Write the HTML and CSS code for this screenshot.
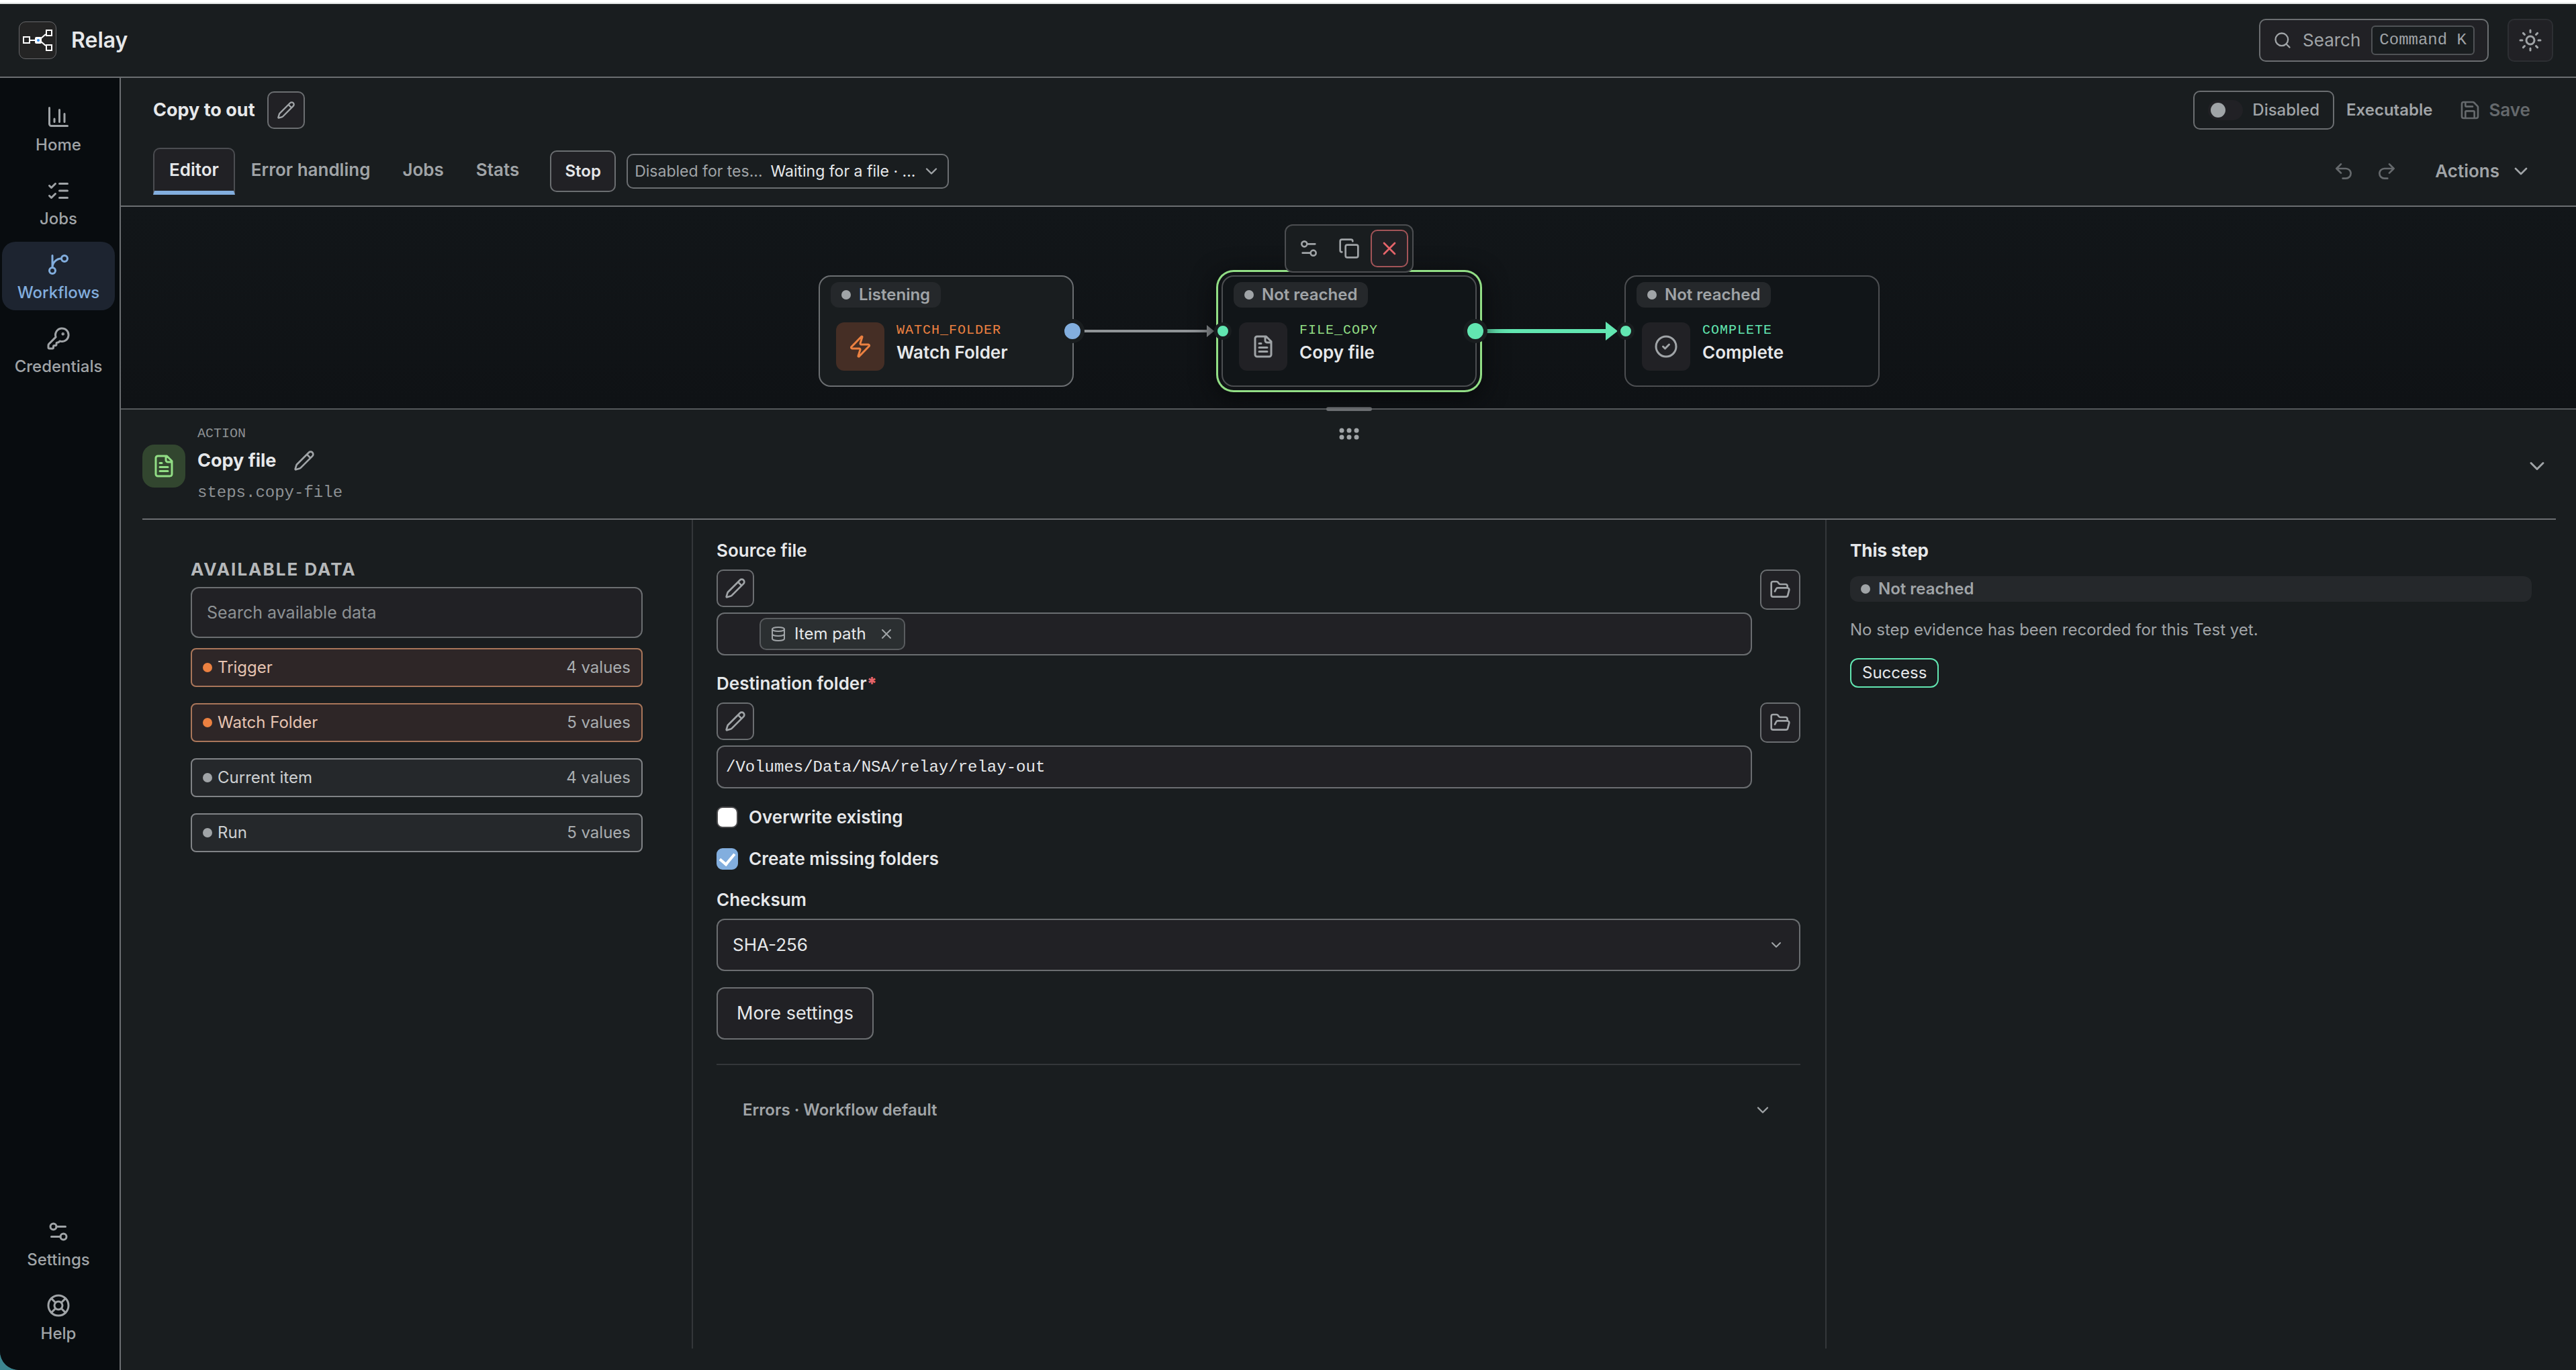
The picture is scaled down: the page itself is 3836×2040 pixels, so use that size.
FILE: index.html
```html
<!DOCTYPE html>
<html lang="en">
<head>
<meta charset="utf-8">
<title>Relay</title>
<link rel="stylesheet" href="styles.css">
</head>
<body>
<svg class="sprite" aria-hidden="true">
  <symbol id="chart" viewBox="0 0 24 24"><path d="M3 3v16a2 2 0 0 0 2 2h16M18 17V9M13 17V5M8 17v-3"/></symbol>
  <symbol id="checks" viewBox="0 0 24 24"><path d="M13 5h8M13 12h8M13 19h8M3 17l2 2 4-4M3 7l2 2 4-4"/></symbol>
  <symbol id="branch" viewBox="0 0 24 24"><path d="M15 6a9 9 0 0 0-9 9V3"/><circle cx="18" cy="6" r="3"/><circle cx="6" cy="18" r="3"/></symbol>
  <symbol id="key" viewBox="0 0 24 24"><path d="M2.586 17.414A2 2 0 0 0 2 18.828V21a1 1 0 0 0 1 1h3a1 1 0 0 0 1-1v-1a1 1 0 0 1 1-1h1a1 1 0 0 0 1-1v-1a1 1 0 0 1 1-1h.172a2 2 0 0 0 1.414-.586l.814-.814a6.5 6.5 0 1 0-4-4z"/><circle cx="16.5" cy="7.5" r=".5" fill="currentColor"/></symbol>
  <symbol id="sliders" viewBox="0 0 24 24"><path d="M14 17H5M19 7h-9"/><circle cx="17" cy="17" r="3"/><circle cx="7" cy="7" r="3"/></symbol>
  <symbol id="buoy" viewBox="0 0 24 24"><circle cx="12" cy="12" r="10"/><path d="m4.93 4.93 4.24 4.24M14.83 9.17l4.24-4.24M14.83 14.83l4.24 4.24M9.17 14.83l-4.24 4.24"/><circle cx="12" cy="12" r="4"/></symbol>
  <symbol id="pencil" viewBox="0 0 24 24"><path d="M21.174 6.812a1 1 0 0 0-3.986-3.987L3.842 16.174a2 2 0 0 0-.5.83l-1.321 4.352a.5.5 0 0 0 .623.622l4.353-1.32a2 2 0 0 0 .83-.497zM15 5l4 4"/></symbol>
  <symbol id="search" viewBox="0 0 24 24"><circle cx="11" cy="11" r="8"/><path d="m21 21-4.3-4.3"/></symbol>
  <symbol id="sun" viewBox="0 0 24 24"><circle cx="12" cy="12" r="4"/><path d="M12 2v2M12 20v2M4.93 4.93l1.41 1.41M17.66 17.66l1.41 1.41M2 12h2M20 12h2M6.34 17.66l-1.41 1.41M19.07 4.93l-1.41 1.41"/></symbol>
  <symbol id="save" viewBox="0 0 24 24"><path d="M15.2 3a2 2 0 0 1 1.4.6l3.8 3.8a2 2 0 0 1 .6 1.4V19a2 2 0 0 1-2 2H5a2 2 0 0 1-2-2V5a2 2 0 0 1 2-2zM17 21v-7a1 1 0 0 0-1-1H8a1 1 0 0 0-1 1v7M7 3v4a1 1 0 0 0 1 1h7"/></symbol>
  <symbol id="undo" viewBox="0 0 24 24"><path d="M9 14 4 9l5-5M4 9h10.5a5.5 5.5 0 0 1 0 11H11"/></symbol>
  <symbol id="redo" viewBox="0 0 24 24"><path d="m15 14 5-5-5-5M20 9H9.500a5.500 5.500 0 0 0 0 11H13"/></symbol>
  <symbol id="down" viewBox="0 0 24 24"><path d="m6 9 6 6 6-6"/></symbol>
  <symbol id="zap" viewBox="0 0 24 24"><path d="M4 14a1 1 0 0 1-.78-1.63l9.9-10.2a.5.5 0 0 1 .86.46l-1.92 6.02A1 1 0 0 0 13 10h7a1 1 0 0 1 .78 1.63l-9.900 10.200a.5.5 0 0 1-.86-.46l1.920-6.020A1 1 0 0 0 11 14z"/></symbol>
  <symbol id="file" viewBox="0 0 24 24"><path d="M15 2H6a2 2 0 0 0-2 2v16a2 2 0 0 0 2 2h12a2 2 0 0 0 2-2V7ZM14 2v4a2 2 0 0 0 2 2h4M10 9H8M16 13H8M16 17H8"/></symbol>
  <symbol id="okay" viewBox="0 0 24 24"><circle cx="12" cy="12" r="10"/><path d="m9 12 2 2 4-4"/></symbol>
  <symbol id="copy" viewBox="0 0 24 24"><rect x="8" y="8" width="14" height="14" rx="2"/><path d="M4 16c-1.100 0-2-.9-2-2V4c0-1.100.9-2 2-2h10c1.100 0 2 .9 2 2"/></symbol>
  <symbol id="cross" viewBox="0 0 24 24"><path d="M18 6 6 18M6 6l12 12"/></symbol>
  <symbol id="folder" viewBox="0 0 24 24"><path d="m6 14 1.500-2.900A2 2 0 0 1 9.240 10H20a2 2 0 0 1 1.940 2.500l-1.540 6a2 2 0 0 1-1.950 1.500H4a2 2 0 0 1-2-2V5a2 2 0 0 1 2-2h3.900a2 2 0 0 1 1.690.9l.81 1.200a2 2 0 0 0 1.670.9H18a2 2 0 0 1 2 2v2"/></symbol>
  <symbol id="data" viewBox="0 0 24 24"><ellipse cx="12" cy="5" rx="9" ry="3"/><path d="M3 5v14a9 3 0 0 0 18 0V5M3 12a9 3 0 0 0 18 0"/></symbol>
</svg>

<header class="topbar">
  <div class="logo">
    <svg viewBox="0 0 48 48" aria-hidden="true"><path class="wire" d="M12 24h9M28 22l8-7M28 25l8 7"/><path class="box" d="M3 19h9v9H3zM37 9h8v8h-8zM37 31h8v8h-8z"/><rect class="hub" x="21" y="20" width="8" height="8" rx="1"/><circle class="core" cx="25" cy="24" r="2"/></svg>
  </div>
  <span class="brand">Relay</span>
  <button class="search"><svg class="i i28"><use href="#search"/></svg><span>Search</span><kbd>Command K</kbd></button>
  <button class="theme" aria-label="Toggle theme"><svg class="i i36"><use href="#sun"/></svg></button>
</header>

<div class="body">
  <nav class="side">
    <a class="nav" href="#home"><svg class="i i36"><use href="#chart"/></svg>Home</a>
    <a class="nav" href="#jobs"><svg class="i i36"><use href="#checks"/></svg>Jobs</a>
    <a class="nav current" href="#workflows"><svg class="i i36"><use href="#branch"/></svg>Workflows</a>
    <a class="nav" href="#credentials"><svg class="i i36"><use href="#key"/></svg>Credentials</a>
    <a class="nav last" href="#settings"><svg class="i i36"><use href="#sliders"/></svg>Settings</a>
    <a class="nav" href="#help"><svg class="i i36"><use href="#buoy"/></svg>Help</a>
  </nav>

  <main class="main">
    <section class="bar">
      <div class="row title-row">
        <h1>Copy to out</h1>
        <button class="square" aria-label="Rename workflow"><svg class="i i28"><use href="#pencil"/></svg></button>
        <label class="switch"><input type="checkbox" role="switch">Disabled</label>
        <span class="mode">Executable</span>
        <button class="plain save" disabled><svg class="i i32"><use href="#save"/></svg>Save</button>
      </div>
      <div class="row tab-row">
        <a class="tab active" href="#editor">Editor</a>
        <a class="tab" href="#errors">Error handling</a>
        <a class="tab" href="#wfjobs">Jobs</a>
        <a class="tab" href="#stats">Stats</a>
        <button class="stop">Stop</button>
        <button class="status"><span class="dim">Disabled for tes...</span><span class="now">Waiting for a file · ...</span><svg class="i i28"><use href="#down"/></svg></button>
        <button class="plain undo" aria-label="Undo" disabled><svg class="i i32"><use href="#undo"/></svg></button>
        <button class="plain redo" aria-label="Redo" disabled><svg class="i i32"><use href="#redo"/></svg></button>
        <button class="plain actions">Actions<svg class="i i32"><use href="#down"/></svg></button>
      </div>
    </section>

    <section class="canvas">
      <div class="graph">
        <svg class="edges" viewBox="0 0 1580 300" aria-hidden="true">
          <path class="e1" d="M395 185h186"/><path class="a1" d="M579 176l11 9-11 9z"/>
          <path class="e2" d="M996 185h178"/><path class="a2" d="M1173 171l18 14-18 14z"/>
        </svg>
        <article class="node n1">
          <span class="chip"><i class="dot"></i>Listening</span>
          <div class="info"><span class="tile orange"><svg class="i i36"><use href="#zap"/></svg></span><div><p class="kind k1">WATCH_FOLDER</p><p class="name">Watch Folder</p></div></div>
          <i class="port out blue"></i>
        </article>
        <article class="node n2">
          <span class="chip"><i class="dot"></i>Not reached</span>
          <div class="info"><span class="tile"><svg class="i i36"><use href="#file"/></svg></span><div><p class="kind k2">FILE_COPY</p><p class="name">Copy file</p></div></div>
          <i class="port in"></i><i class="port out"></i>
        </article>
        <article class="node n3">
          <span class="chip"><i class="dot"></i>Not reached</span>
          <div class="info"><span class="tile"><svg class="i i36"><use href="#okay"/></svg></span><div><p class="kind k3">COMPLETE</p><p class="name">Complete</p></div></div>
          <i class="port in"></i>
        </article>
        <div class="tools">
          <button aria-label="Configure"><svg class="i i32"><use href="#sliders"/></svg></button>
          <button aria-label="Duplicate"><svg class="i i32"><use href="#copy"/></svg></button>
          <button class="del" aria-label="Delete"><svg class="i i32"><use href="#cross"/></svg></button>
        </div>
      </div>
    </section>

    <section class="panel">
      <div class="grip"><svg viewBox="0 0 30 20" aria-hidden="true"><circle cx="4" cy="5" r="3.500"/><circle cx="15" cy="5" r="3.500"/><circle cx="26" cy="5" r="3.500"/><circle cx="4" cy="15" r="3.500"/><circle cx="15" cy="15" r="3.500"/><circle cx="26" cy="15" r="3.500"/></svg></div>
      <header class="phead">
        <span class="tile green"><svg class="i i36"><use href="#file"/></svg></span>
        <div class="ptext">
          <p class="ptype">ACTION</p>
          <div class="pname"><h2>Copy file</h2><button class="plain" aria-label="Rename step"><svg class="i i32"><use href="#pencil"/></svg></button></div>
          <p class="pid">steps.copy-file</p>
        </div>
        <button class="plain collapse" aria-label="Collapse panel"><svg class="i i36"><use href="#down"/></svg></button>
      </header>
      <div class="cols">
        <aside class="avail">
          <h3>AVAILABLE DATA</h3>
          <input type="search" aria-label="Search available data" placeholder="Search available data">
          <button class="src hot"><i class="dot"></i>Trigger<span>4 values</span></button>
          <button class="src hot"><i class="dot"></i>Watch Folder<span>5 values</span></button>
          <button class="src"><i class="dot"></i>Current item<span>4 values</span></button>
          <button class="src"><i class="dot"></i>Run<span>5 values</span></button>
        </aside>
        <form class="form">
          <div class="field">
            <span class="label" id="source-label">Source file</span>
            <div class="picks"><button type="button" class="square" aria-label="Edit source"><svg class="i i32"><use href="#pencil"/></svg></button><button type="button" class="browse" aria-label="Browse source"><svg class="i i32"><use href="#folder"/></svg></button></div>
            <div class="box" role="textbox" aria-labelledby="source-label"><span class="token"><svg class="i i24"><use href="#data"/></svg>Item path<button type="button" aria-label="Remove"><svg class="i i24"><use href="#cross"/></svg></button></span></div>
          </div>
          <div class="field">
            <label class="label" for="dest">Destination folder<b>*</b></label>
            <div class="picks"><button type="button" class="square" aria-label="Edit destination"><svg class="i i32"><use href="#pencil"/></svg></button><button type="button" class="browse" aria-label="Browse destination"><svg class="i i32"><use href="#folder"/></svg></button></div>
            <input class="box path" id="dest" type="text" value="/Volumes/Data/NSA/relay/relay-out">
          </div>
          <div class="checks">
            <label class="check"><input type="checkbox">Overwrite existing</label>
            <label class="check"><input type="checkbox" checked>Create missing folders</label>
          </div>
          <div class="field sum">
            <label class="label" for="sum">Checksum</label>
            <div class="select"><select id="sum"><option>SHA-256</option></select><svg class="i i24"><use href="#down"/></svg></div>
          </div>
          <button type="button" class="more">More settings</button>
          <button type="button" class="errors">Errors · Workflow default<svg class="i i28"><use href="#down"/></svg></button>
        </form>
        <aside class="step">
          <h3>This step</h3>
          <p class="state"><i class="dot"></i>Not reached</p>
          <p class="note">No step evidence has been recorded for this Test yet.</p>
          <button class="success">Success</button>
        </aside>
      </div>
    </section>
  </main>
</div>
</body>
</html>
```
FILE: styles.css
```css
* { box-sizing: border-box; margin: 0; }
:root {
  --sans: Inter, "Liberation Sans", sans-serif;
  --mono: "Liberation Mono", monospace;
  --bg: #191d1f; --raised: #212125; --line: #6b6e71; --faint: #34373a;
  --text: #e6e8ea; --muted: #a0a4a7; --blue: #82aede; --green: #62e6b1; --leaf: #92de85; --orange: #ec8141;
}
html { height: 100%; background: #3d8791; }
body { height: 100%; display: flex; flex-direction: column; border-top: 4px solid #fff; background: var(--bg); color: var(--text); font: 400 24px/32px var(--sans); border-bottom-left-radius: 28px; overflow: hidden; }
button, input, select { font: inherit; color: inherit; }
button { display: flex; align-items: center; justify-content: center; padding: 0; border: 2px solid var(--line); border-radius: 10px; background: var(--raised); color: var(--muted); }
a { color: inherit; text-decoration: none; }
.sprite { position: absolute; width: 0; height: 0; }
.i { flex: none; fill: none; stroke: currentColor; stroke-width: 2; stroke-linecap: round; stroke-linejoin: round; }
.i24 { width: 24px; height: 24px; }
.i28 { width: 28px; height: 28px; }
.i32 { width: 32px; height: 32px; }
.i36 { width: 36px; height: 36px; }
.dot { flex: none; width: 14px; height: 14px; border-radius: 50%; background: var(--muted); }
.plain { border: 0; background: none; font-size: 26px; font-weight: 600; }
.plain:disabled { color: #65696c; }

.topbar { display: flex; align-items: center; height: 112px; flex: none; padding: 0 34px 0 28px; border-top: 2px solid #dfe2e1; border-bottom: 2px solid var(--line); }
.logo { width: 56px; height: 56px; border: 1px solid #67676a; border-radius: 10px; background: #242424; display: grid; place-items: center; }
.logo svg { width: 48px; height: 48px; fill: none; stroke: #fff; stroke-width: 2; }
.logo .hub { fill: #fff; }
.logo .core { fill: #2f8cf0; stroke: none; }
.brand { margin-left: 22px; font-size: 32px; font-weight: 600; }
.search { width: 342px; margin-left: auto; height: 64px; gap: 16px; font-size: 26px; }
kbd { height: 44px; padding: 0 10px; border: 2px solid #4f5255; border-radius: 6px; background: var(--bg); font: 24px/40px var(--mono); }
.theme { width: 68px; height: 64px; margin-left: 28px; border-color: #2d2f33; }

.body { flex: 1; display: flex; min-height: 0; }
.side { width: 180px; flex: none; display: flex; flex-direction: column; gap: 8px; padding: 24px 7px 28px 3px; border-right: 2px solid var(--line); background: #080c0f; }
.nav { display: flex; flex-direction: column; align-items: center; gap: 8px; height: 102px; padding-top: 16px; border-radius: 20px; color: var(--muted); font-weight: 500; }
.nav.current { background: #1d2430; color: var(--blue); }
.last { margin-top: auto; }

.main { flex: 1; min-width: 0; display: flex; flex-direction: column; }
.bar { flex: none; height: 192px; padding: 16px 66px 0 48px; border-bottom: 2px solid var(--line); }
.row { display: flex; align-items: center; }
.title-row { height: 64px; }
h1 { font-size: 27px; font-weight: 700; }
.square { width: 56px; height: 56px; }
.title-row .square { margin-left: 18px; }
.switch { display: flex; align-items: center; gap: 14px; height: 58px; margin-left: auto; padding: 0 20px; border: 2px solid var(--line); border-radius: 10px; color: var(--muted); font-weight: 500; }
.switch input { appearance: none; width: 52px; height: 30px; margin: 0; padding: 4px; border-radius: 15px; background: var(--raised); }
.switch input::before { content: ""; display: block; width: 22px; height: 22px; border-radius: 50%; background: var(--muted); }
.mode { margin-left: 18px; color: var(--muted); font-weight: 600; }
.save { margin-left: 40px; margin-right: 2px; gap: 12px; }
.tab-row { height: 118px; }
.tab { height: 70px; padding: 0 22px; border: 2px solid transparent; border-bottom-width: 6px; color: var(--muted); font-size: 26px; font-weight: 600; line-height: 62px; }
.active { border-color: #4b4d51; border-bottom-color: var(--blue); border-radius: 10px 10px 0 0; background: var(--raised); color: var(--text); }
.stop { width: 98px; height: 62px; margin-left: 22px; color: var(--text); font-weight: 600; }
.status { width: 480px; height: 52px; margin-left: 16px; padding: 0 10px; background: none; font-size: 23px; white-space: nowrap; }
.now { margin-left: 12px; color: var(--text); }
.status .i { margin-left: auto; }
.undo { margin-left: auto; }
.redo { margin-left: 32px; }
.actions { margin-left: 56px; gap: 16px; }

.canvas { flex: none; height: 300px; background: linear-gradient(#121619, #0f1215); display: flex; justify-content: center; overflow: hidden; }
.graph { position: relative; width: 1580px; height: 300px; }
.edges { position: absolute; inset: 0; width: 1580px; height: 300px; }
.e1, .e2 { fill: none; stroke: #909497; stroke-width: 4; }
.e2 { stroke: var(--green); stroke-width: 6; }
.a1 { fill: #909497; }
.a2 { fill: var(--green); }
.node { position: absolute; top: 102px; width: 380px; height: 166px; padding: 8px 16px; border: 2px solid #4c4e51; border-radius: 18px; background: #111518; }
.n1 { left: 1px; border-color: var(--line); background: var(--bg); }
.n2 { left: 601px; box-shadow: 0 0 0 5px #101316, 0 0 0 8px var(--leaf), 0 8px 36px 8px #08090b; }
.n3 { left: 1201px; }
.chip { display: inline-flex; align-items: center; gap: 12px; height: 38px; padding: 0 16px; border-radius: 12px; background: #25282b; color: var(--muted); font-weight: 600; }
.info { display: flex; gap: 18px; margin: 22px 0 0 8px; }
.tile { flex: none; display: grid; place-items: center; width: 72px; height: 72px; border-radius: 12px; background: var(--raised); color: var(--muted); }
.orange { background: #452e25; color: var(--orange); }
.kind { font: 20px/24px var(--mono); letter-spacing: 1px; }
.k1 { color: var(--orange); }
.k2 { color: var(--leaf); }
.k3 { color: var(--green); }
.name { font-size: 26px; font-weight: 600; line-height: 42px; }
.port { position: absolute; border: 6px solid var(--bg); border-radius: 50%; background: var(--green); }
.out { width: 36px; height: 36px; right: -18px; top: 63px; }
.in { width: 26px; height: 26px; left: -13px; top: 68px; border-width: 5px; }
.blue { background: var(--blue); }
.tools { position: absolute; left: 695px; top: 26px; display: flex; width: 192px; height: 72px; padding: 6px; gap: 4px; border: 2px solid #4c4e51; border-radius: 12px; background: var(--bg); }
.tools button { width: 56px; height: 56px; border-color: transparent; background: none; }
.tools .del { border-color: #a35458; background: var(--raised); color: #e5646a; }

.panel { flex: 1; min-height: 0; display: flex; flex-direction: column; border-top: 2px solid #55585b; padding: 0 30px 32px 32px; }
.grip { height: 0; display: flex; flex-direction: column; align-items: center; }
.grip::before { content: ""; flex: none; width: 68px; height: 6px; margin-top: -4px; border-radius: 3px; background: var(--line); }
.grip svg { flex: none; width: 30px; height: 20px; margin-top: 24px; fill: var(--muted); }
.phead { flex: none; display: flex; align-items: center; height: 164px; padding-top: 6px; border-bottom: 2px solid var(--line); }
.green { width: 64px; height: 64px; border-radius: 18px; background: #32462f; color: var(--leaf); }
.ptext { margin-left: 18px; color: #8d9194; }
.ptype { font: 20px/28px var(--mono); }
.pname { display: flex; align-items: center; gap: 26px; height: 52px; color: var(--text); }
h2 { font-size: 27px; font-weight: 700; }
.pid { font: 24px/44px var(--mono); }
.collapse { margin-left: auto; margin-right: 10px; }

.cols { flex: 1; display: grid; grid-template-columns: 820px 1688fr 1086fr; }
.avail { padding: 56px 73px 0 72px; border-right: 2px solid var(--faint); display: flex; flex-direction: column; }
.avail h3 { font-size: 26px; font-weight: 700; line-height: 36px; letter-spacing: 2px; color: #b5b8ba; margin-bottom: 8px; }
.avail input { height: 76px; margin-bottom: 15px; padding: 0 22px; border: 2px solid var(--line); border-radius: 12px; background: var(--raised); font-size: 25px; }
input::placeholder { color: #8d9194; }
.src { height: 58px; margin-bottom: 24px; padding: 0 16px; gap: 8px; border-color: #808386; border-radius: 8px; background: #25282b; color: #cdd0d2; }
.src span { margin-left: auto; color: #a9adb0; }
.hot { border-color: #a9765a; background: #2e2627; color: #e6c4b2; }
.hot .dot { background: var(--orange); }

.form { padding: 28px 37px 0 35px; border-right: 2px solid var(--faint); display: flex; flex-direction: column; align-items: stretch; }
.field { display: flex; flex-direction: column; margin-bottom: 24px; }
.label { font-size: 26px; font-weight: 600; line-height: 36px; margin-bottom: 10px; }
.label b { color: #e5646a; }
.picks { display: flex; justify-content: space-between; height: 56px; margin-bottom: 8px; }
.browse { width: 60px; height: 60px; }
.box { height: 64px; margin-right: 72px; padding: 0 12px; border: 2px solid var(--line); border-radius: 12px; background: var(--raised); display: flex; align-items: center; }
.path { font: 24px/32px var(--mono); }
.token { display: flex; align-items: center; gap: 12px; height: 48px; margin-left: 50px; padding: 0 14px; border: 2px solid #595c5f; border-radius: 10px; background: #2b2f31; }
.token > .i { color: var(--muted); }
.token button { border: 0; background: none; margin-left: 6px; }
.checks { margin-top: -12px; }
.check { display: flex; align-items: center; gap: 16px; height: 62px; font-size: 26px; font-weight: 600; }
.check input { appearance: none; width: 32px; height: 32px; margin: 0; border: 2px solid #4a4a4c; border-radius: 9px; background: #fff; display: grid; place-items: center; }
.check input:checked { border-color: var(--blue); background: var(--blue); }
.check input:checked::before { content: ""; width: 10px; height: 18px; margin-top: -4px; border: solid #fff; border-width: 0 4px 4px 0; transform: rotate(40deg); }
.sum { margin-top: 12px; }
.select { display: grid; align-items: center; }
.select > * { grid-area: 1 / 1; }
.select select { appearance: none; height: 78px; padding: 0 22px; border: 2px solid var(--line); border-radius: 12px; background: var(--raised); font-size: 26px; }
.select .i { justify-self: end; margin-right: 24px; color: var(--muted); pointer-events: none; }
.more { align-self: flex-start; height: 78px; padding: 0 28px; border-radius: 12px; color: var(--text); font-size: 27px; }
.errors { justify-content: space-between; height: 136px; margin-top: 36px; padding: 0 42px 0 39px; border-width: 2px 0 0; border-color: var(--faint); border-radius: 0; background: none; font-weight: 600; }

.step { padding: 28px 36px 0 35px; display: flex; flex-direction: column; align-items: stretch; }
.step h3 { font-size: 26px; font-weight: 700; line-height: 36px; }
.state { display: flex; align-items: center; gap: 12px; height: 38px; margin-top: 20px; padding: 0 16px; border-radius: 12px; background: #25282b; color: var(--muted); font-weight: 600; }
.note { margin-top: 26px; color: var(--muted); }
.success { align-self: flex-start; height: 44px; margin-top: 26px; padding: 0 16px; border-color: var(--green); border-radius: 12px; background: none; color: var(--text); }
```
